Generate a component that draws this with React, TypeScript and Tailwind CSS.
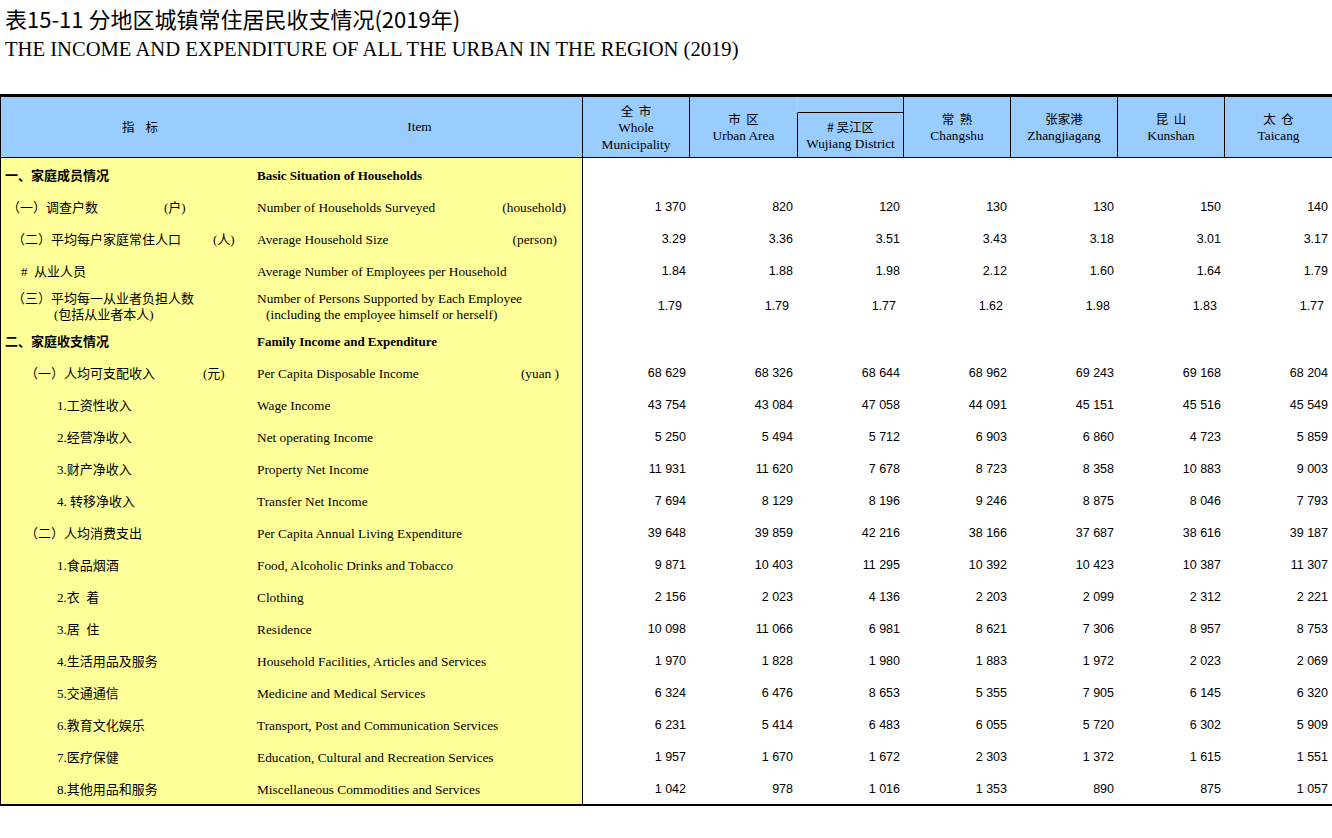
import React from "react";

// ─── Data ────────────────────────────────────────────────────────────────────

type Row = {
  cn: string;
  cn2?: string;
  cnPad: string;
  cnW?: string;
  cnUnit?: string;
  en: string;
  en2?: string;
  enUnit?: string;
  enUnitCls?: string;
  bold?: boolean;
  tall?: boolean;
  values?: string[];
};

const rows: Row[] = [
  { cn: "一、家庭成员情况", cnPad: "pl-[4px]", en: "Basic Situation of Households", bold: true },
  {
    cn: "（一）调查户数",
    cnPad: "pl-[6px]",
    cnW: "w-[157px]",
    cnUnit: "(户)",
    en: "Number of Households Surveyed",
    enUnit: "(household)",
    enUnitCls: "mr-[16px]",
    values: ["1 370", "820", "120", "130", "130", "150", "140"],
  },
  {
    cn: "（二）平均每户家庭常住人口",
    cnPad: "pl-[11px]",
    cnW: "w-[201px]",
    cnUnit: "(人)",
    en: "Average Household Size",
    enUnit: "(person)",
    enUnitCls: "mr-[25px]",
    values: ["3.29", "3.36", "3.51", "3.43", "3.18", "3.01", "3.17"],
  },
  {
    cn: "#  从业人员",
    cnPad: "pl-[20px]",
    en: "Average Number of Employees per Household",
    values: ["1.84", "1.88", "1.98", "2.12", "1.60", "1.64", "1.79"],
  },
  {
    cn: "（三）平均每一从业者负担人数",
    cn2: "(包括从业者本人)",
    cnPad: "pl-[11px]",
    en: "Number of Persons Supported by Each Employee",
    en2: "(including the employee himself or herself)",
    tall: true,
    values: ["1.79", "1.79", "1.77", "1.62", "1.98", "1.83", "1.77"],
  },
  { cn: "二、家庭收支情况", cnPad: "pl-[4px]", en: "Family Income and Expenditure", bold: true },
  {
    cn: "（一）人均可支配收入",
    cnPad: "pl-[24px]",
    cnW: "w-[178px]",
    cnUnit: "(元)",
    en: "Per Capita Disposable Income",
    enUnit: "(yuan )",
    enUnitCls: "mr-[23px]",
    values: ["68 629", "68 326", "68 644", "68 962", "69 243", "69 168", "68 204"],
  },
  {
    cn: "1.工资性收入",
    cnPad: "pl-[56px]",
    en: "Wage Income",
    values: ["43 754", "43 084", "47 058", "44 091", "45 151", "45 516", "45 549"],
  },
  {
    cn: "2.经营净收入",
    cnPad: "pl-[56px]",
    en: "Net operating Income",
    values: ["5 250", "5 494", "5 712", "6 903", "6 860", "4 723", "5 859"],
  },
  {
    cn: "3.财产净收入",
    cnPad: "pl-[56px]",
    en: "Property Net Income",
    values: ["11 931", "11 620", "7 678", "8 723", "8 358", "10 883", "9 003"],
  },
  {
    cn: "4. 转移净收入",
    cnPad: "pl-[56px]",
    en: "Transfer Net Income",
    values: ["7 694", "8 129", "8 196", "9 246", "8 875", "8 046", "7 793"],
  },
  {
    cn: "（二）人均消费支出",
    cnPad: "pl-[24px]",
    en: "Per Capita Annual Living Expenditure",
    values: ["39 648", "39 859", "42 216", "38 166", "37 687", "38 616", "39 187"],
  },
  {
    cn: "1.食品烟酒",
    cnPad: "pl-[56px]",
    en: "Food, Alcoholic Drinks and Tobacco",
    values: ["9 871", "10 403", "11 295", "10 392", "10 423", "10 387", "11 307"],
  },
  {
    cn: "2.衣  着",
    cnPad: "pl-[56px]",
    en: "Clothing",
    values: ["2 156", "2 023", "4 136", "2 203", "2 099", "2 312", "2 221"],
  },
  {
    cn: "3.居  住",
    cnPad: "pl-[56px]",
    en: "Residence",
    values: ["10 098", "11 066", "6 981", "8 621", "7 306", "8 957", "8 753"],
  },
  {
    cn: "4.生活用品及服务",
    cnPad: "pl-[56px]",
    en: "Household Facilities, Articles and Services",
    values: ["1 970", "1 828", "1 980", "1 883", "1 972", "2 023", "2 069"],
  },
  {
    cn: "5.交通通信",
    cnPad: "pl-[56px]",
    en: "Medicine and Medical Services",
    values: ["6 324", "6 476", "8 653", "5 355", "7 905", "6 145", "6 320"],
  },
  {
    cn: "6.教育文化娱乐",
    cnPad: "pl-[56px]",
    en: "Transport, Post and Communication Services",
    values: ["6 231", "5 414", "6 483", "6 055", "5 720", "6 302", "5 909"],
  },
  {
    cn: "7.医疗保健",
    cnPad: "pl-[56px]",
    en: "Education, Cultural and Recreation Services",
    values: ["1 957", "1 670", "1 672", "2 303", "1 372", "1 615", "1 551"],
  },
  {
    cn: "8.其他用品和服务",
    cnPad: "pl-[56px]",
    en: "Miscellaneous Commodities and Services",
    values: ["1 042", "978", "1 016", "1 353", "890", "875", "1 057"],
  },
];

const serif = "font-['Liberation_Serif','Times_New_Roman','Noto_Sans_CJK_SC',serif]";
const cjk = "font-['Noto_Sans_CJK_SC',sans-serif]";
const mixed = "font-['Liberation_Serif','Noto_Sans_CJK_SC',serif]";
const num = "font-['Liberation_Sans',Arial,sans-serif]";

// ─── Header ──────────────────────────────────────────────────────────────────

function HeadCell({ cn, en, en2, last }: { cn: string; en: string; en2?: string; last?: boolean }) {
  return (
    <div
      className={`w-[107px] shrink-0 flex flex-col items-center justify-center leading-[17px] ${last ? "" : "border-r border-black"}`}
    >
      <span className={`${cjk} text-[12.5px] whitespace-pre`}>{cn}</span>
      <span className={`${serif} text-[13.33px]`}>{en}</span>
      {en2 && <span className={`${serif} text-[13.33px]`}>{en2}</span>}
    </div>
  );
}

function TableHeader() {
  return (
    <div className="flex h-[61px] bg-[#99ccff] border-b border-black text-black">
      <div className="w-[583px] shrink-0 flex border-l border-r border-black">
        <div className={`w-[256px] pl-[22px] flex items-center justify-center ${cjk} text-[12.5px] whitespace-pre`}>
          指    标
        </div>
        <div className={`flex-1 flex items-center justify-center ${serif} text-[13.33px]`}>Item</div>
      </div>
      <HeadCell cn="全  市" en="Whole" en2="Municipality" />
      <div className="w-[107px] shrink-0 flex flex-col items-center justify-center leading-[17px]">
        <span className={`${cjk} text-[12.5px] whitespace-pre`}>市  区</span>
        <span className={`${serif} text-[13.33px]`}>Urban Area</span>
      </div>
      <div className="w-[107px] shrink-0 flex flex-col border-r border-black">
        <div className="h-[16px] border-l border-[#c4ccd8] border-b border-b-black" />
        <div className="flex-1 flex flex-col items-center justify-center leading-[17px] border-l border-black">
          <span className={`${cjk} text-[12.5px] whitespace-pre`}># 吴江区</span>
          <span className={`${serif} text-[13.33px]`}>Wujiang District</span>
        </div>
      </div>
      <HeadCell cn="常  熟" en="Changshu" />
      <HeadCell cn="张家港" en="Zhangjiagang" />
      <HeadCell cn="昆  山" en="Kunshan" />
      <HeadCell cn="太  仓" en="Taicang" last />
    </div>
  );
}

// ─── Body Row ────────────────────────────────────────────────────────────────

function BodyRow({ row }: { row: Row }) {
  const weight = row.bold ? "font-bold" : "font-normal";
  return (
    <div className={`flex ${row.tall ? "h-[38px]" : "h-[32px]"}`}>
      <div className="w-[583px] shrink-0 flex bg-[#ffff99] border-l border-r border-black pt-[3px]">
        <div className={`w-[256px] flex flex-col justify-center ${row.cnPad} ${mixed} text-[13px] ${weight} leading-[16px]`}>
          <div className="flex whitespace-pre">
            <span className={row.cnW ?? ""}>{row.cn}</span>
            {row.cnUnit && <span>{row.cnUnit}</span>}
          </div>
          {row.cn2 && <div className="pl-[42px] whitespace-pre">{row.cn2}</div>}
        </div>
        <div
          className={`flex-1 flex flex-col justify-center ${serif} ${row.bold ? "text-[13px]" : "text-[13.33px]"} ${weight} leading-[16px]`}
        >
          <div className="flex">
            <span>{row.en}</span>
            {row.enUnit && <span className={`ml-auto ${row.enUnitCls}`}>{row.enUnit}</span>}
          </div>
          {row.en2 && <div className="pl-[9px]">{row.en2}</div>}
        </div>
      </div>
      {(row.values ?? Array(7).fill("")).map((v, i) => (
        <div
          key={i}
          className={`w-[107px] shrink-0 flex items-center justify-end pt-[3px] ${row.tall ? "pr-[8px]" : "pr-[4px]"} ${num} text-[12.5px] whitespace-pre`}
        >
          {v}
        </div>
      ))}
    </div>
  );
}

// ─── Page ────────────────────────────────────────────────────────────────────

export default function App() {
  return (
    <div className="w-[1332px] h-[838px] bg-white text-black overflow-hidden">
      <div className={`h-[36px] flex items-center pl-[5px] ${cjk} text-[22px] whitespace-pre`}>
        表15-11 分地区城镇常住居民收支情况(2019年)
      </div>
      <div className={`h-[26px] flex items-center pl-[5px] ${serif} text-[20.6px] whitespace-pre`}>
        THE INCOME AND EXPENDITURE OF ALL THE URBAN IN THE REGION (2019)
      </div>
      <div className="mt-[32px] border-t-[3px] border-black">
        <TableHeader />
        {rows.map((r, i) => (
          <BodyRow key={i} row={r} />
        ))}
        <div className="border-t-2 border-black" />
      </div>
    </div>
  );
}
